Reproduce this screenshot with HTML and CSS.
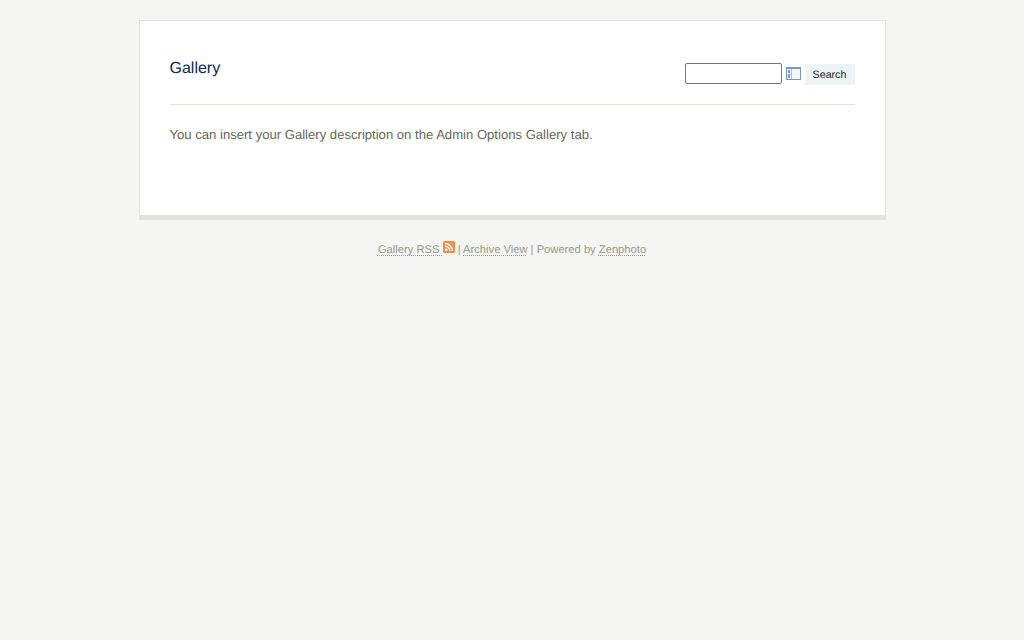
FILE: index.html
```html
<!DOCTYPE html>
<html lang="en">
<head>
<meta charset="utf-8">
<title>Gallery</title>
<link rel="stylesheet" href="styles.css">
</head>
<body>
<main class="card">
  <header class="head">
    <h1 class="title">Gallery</h1>
    <form class="search">
      <input class="search-input" type="text" aria-label="Search">
      <svg class="options-icon" width="15" height="13" viewBox="0 0 15 13" aria-hidden="true">
        <rect x="0" y="0" width="15" height="13" fill="#7396cd"/>
        <rect x="1" y="2" width="4" height="10" fill="#e6edf7"/>
        <rect x="5" y="2" width="1" height="10" fill="#a9c0e2"/>
        <rect x="6" y="2" width="8" height="10" fill="#f4f8fc"/>
        <rect x="2" y="3" width="2" height="3" fill="#7f9fd2"/>
        <rect x="2" y="7" width="2" height="4" fill="#7f9fd2"/>
      </svg>
      <button class="search-btn" type="button">Search</button>
    </form>
  </header>
  <p class="desc">You can insert your Gallery description on the Admin Options Gallery tab.</p>
</main>
<footer class="foot">
  <a class="link" href="#">Gallery RSS <svg class="rss" width="12" height="12" viewBox="0 0 12 12" aria-hidden="true"><rect width="12" height="12" rx="1.5" fill="#f58b50"/><circle cx="3.2" cy="8.8" r="1.3" fill="#fff"/><path d="M2 5.2a4.8 4.8 0 0 1 4.8 4.8M2 2.6a7.4 7.4 0 0 1 7.4 7.4" fill="none" stroke="#fff" stroke-width="1.5"/></svg></a> | <a class="link" href="#">Archive View</a> | Powered by <a class="link" href="#">Zenphoto</a>
</footer>
</body>
</html>
```
FILE: styles.css
```css
html, body { margin: 0; padding: 0; }
body {
  background: #f5f5f3;
  font-family: "Liberation Sans", Arial, sans-serif;
  color: #555;
  text-rendering: geometricPrecision;
}
.card {
  box-sizing: border-box;
  width: 747px;
  height: 200px;
  margin: 20px auto 0;
  padding: 0 30px;
  background: #fff;
  border: 1px solid #e3e3dc;
  border-bottom-width: 5px;
}
.head {
  display: flex;
  justify-content: space-between;
  height: 83px;
  border-bottom: 1px solid #e3e3dc;
}
.title {
  margin: 38px 0 0;
  font-size: 16px;
  line-height: 19px;
  font-weight: normal;
  color: #002b55;
}
.search {
  display: flex;
  align-items: flex-start;
  margin-top: 42px;
}
.search-input {
  box-sizing: border-box;
  width: 97px;
  height: 21px;
  margin: 0;
  padding: 1px 2px;
  border: 1px solid #767676;
  border-radius: 2px;
  background: #fff;
}
.options-icon { margin: 4px 4px 0; display: block; }
.search-btn {
  width: 50px;
  height: 21px;
  margin: 1px 0 0;
  padding: 0;
  border: 0;
  background: #edf4f8;
  color: #222;
  text-rendering: geometricPrecision;
  font: 10.67px "Liberation Sans", Arial, sans-serif;
}
.desc {
  margin: 21px 0 0;
  font-size: 13.1px;
  line-height: 18px;
  color: #666655;
}
.foot {
  margin-top: 21px;
  text-align: center;
  font-size: 11.2px;
  line-height: 16px;
  color: #999988;
}
.link {
  color: #999988;
  text-decoration: underline dotted 1px #999988;
  text-underline-offset: 2px;
  text-decoration-skip-ink: none;
}
.rss { vertical-align: baseline; }
```
